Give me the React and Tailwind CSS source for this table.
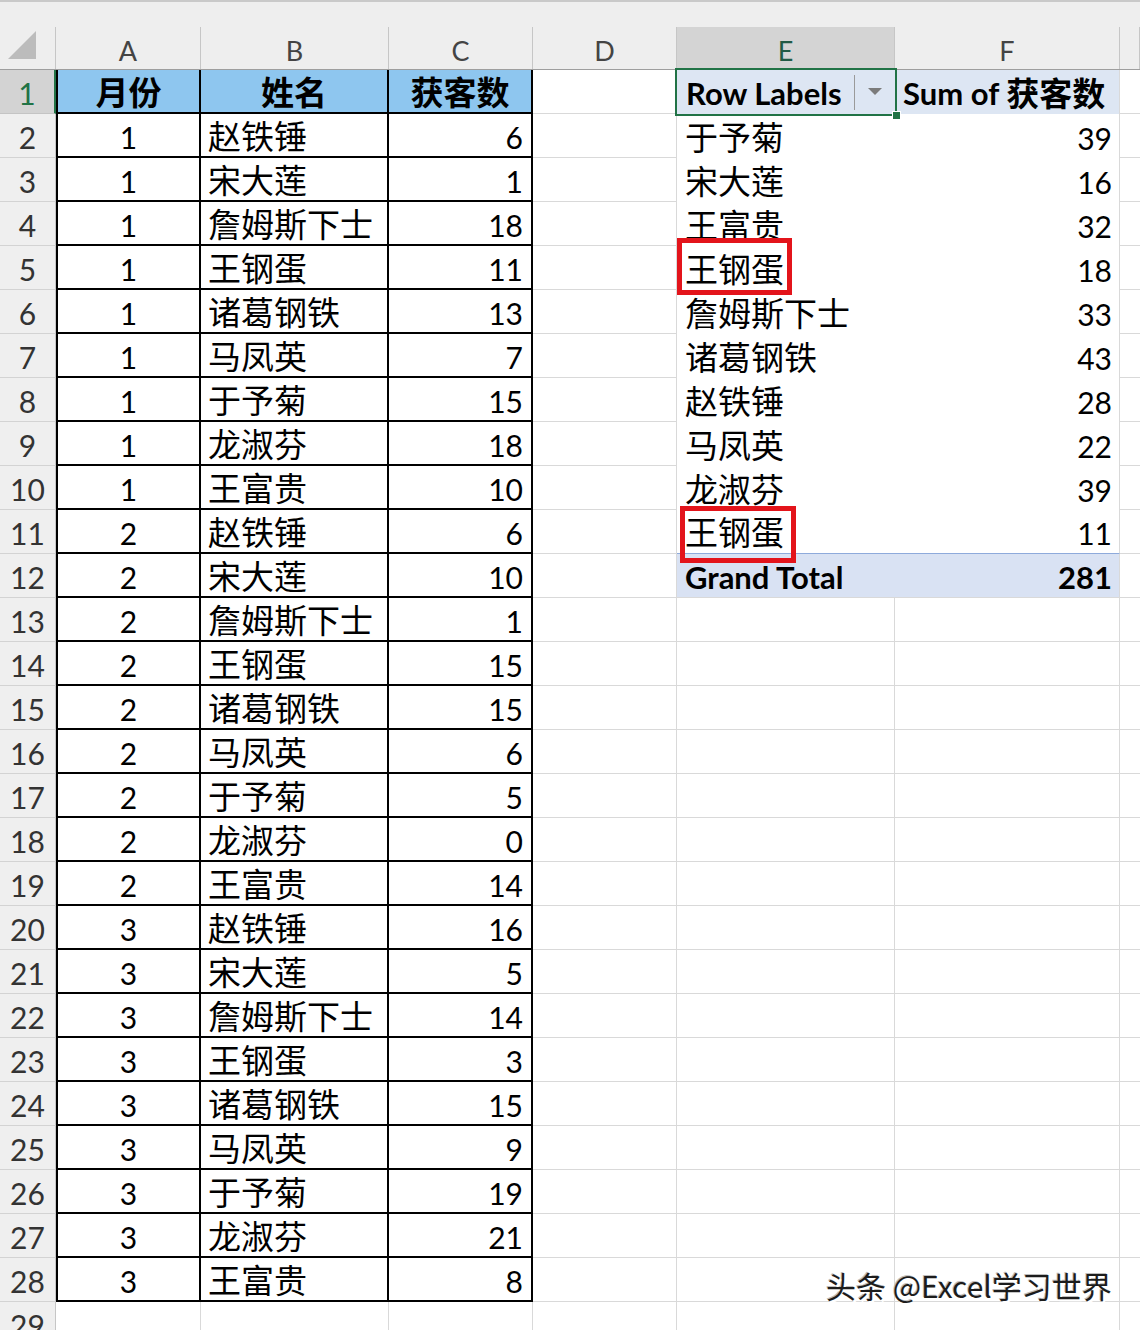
import React from "react";

const names = ["赵铁锤", "宋大莲", "詹姆斯下士", "王钢蛋", "诸葛钢铁", "马凤英", "于予菊", "龙淑芬", "王富贵"];
const counts = [
  [6, 1, 18, 11, 13, 7, 15, 18, 10],
  [6, 10, 1, 15, 15, 6, 5, 0, 14],
  [16, 5, 14, 3, 15, 9, 19, 21, 8],
];
const records = counts.flatMap((list, m) => list.map((count, i) => ({ month: m + 1, name: names[i], count })));

const pivot = [
  { name: "于予菊", total: 39 },
  { name: "宋大莲", total: 16 },
  { name: "王富贵", total: 32 },
  { name: "王钢蛋", total: 18, mark: "five" },
  { name: "詹姆斯下士", total: 33 },
  { name: "诸葛钢铁", total: 43 },
  { name: "赵铁锤", total: 28 },
  { name: "马凤英", total: 22 },
  { name: "龙淑芬", total: 39 },
  { name: "王钢蛋", total: 11, mark: "eleven" },
];

const columns = ["A", "B", "C", "D", "E", "F", ""];
const rowNumbers = Array.from({ length: 29 }, (_, i) => i + 1);

const gridCols = "grid grid-cols-[56px_145px_188px_144px_144px_218px_225px_20px]";
const num = "font-['Lato','Noto_Sans_CJK_SC',sans-serif] text-[30px] leading-none";
const cjk = "font-['Noto_Sans_CJK_SC',sans-serif] text-[33px] leading-none";
const gridline = "border-r border-b border-[#d9d9d9]";
const tableCell = "border-r-2 border-b-2 border-black";

function CornerTriangle() {
  return (
    <svg width="32" height="30" viewBox="0 0 32 30" className="mt-[4px] ml-[6px]">
      <polygon points="30,0 30,28 2,28" fill="#bcbcbc" />
    </svg>
  );
}

function DropdownButton() {
  return (
    <div className="ml-auto flex h-[35px] w-[41px] items-center justify-center border-l border-[#9a9a9a]">
      <svg width="14" height="8" viewBox="0 0 14 8">
        <polygon points="0,0 14,0 7,7" fill="#7b7b7b" />
      </svg>
    </div>
  );
}

function RedBox({ mark }) {
  if (mark === "five") {
    return <div className="absolute left-0 top-[-8px] z-10 h-[57px] w-[115px] border-[5px] border-[#e3141b]" />;
  }
  return <div className="absolute left-[3px] top-[-4px] z-10 h-[57px] w-[116px] border-[5px] border-[#e3141b]" />;
}

function RowHeader({ n }) {
  const active = n === 1;
  return (
    <div
      className={
        "flex items-center justify-center pt-[3px] border-b " +
        num +
        " " +
        (active
          ? "bg-[#d3d3d3] text-[#217346] border-b-[#c4c4c4] border-r-2 border-r-[#217346]"
          : "bg-[#efefef] text-[#333333] border-b-[#d3d3d3] border-r border-r-[#c6c6c6]")
      }
    >
      {n}
    </div>
  );
}

function DataCells({ n }) {
  if (n === 1) {
    const head = "flex items-center justify-center bg-[#8ec6ef] font-bold text-black " + tableCell + " " + cjk;
    return (
      <>
        <div className={head + " border-l-2"}>月份</div>
        <div className={head}>姓名</div>
        <div className={head}>获客数</div>
      </>
    );
  }
  if (n > 28) {
    return (
      <>
        <div className={gridline} />
        <div className={gridline} />
        <div className={gridline} />
      </>
    );
  }
  const r = records[n - 2];
  return (
    <>
      <div className={"flex items-center justify-center pt-[3px] border-l-2 text-black " + tableCell + " " + num}>
        {r.month}
      </div>
      <div className={"flex items-center pl-[7px] text-black " + tableCell + " " + cjk}>{r.name}</div>
      <div className={"flex items-center justify-end pr-[8px] pt-[3px] text-black " + tableCell + " " + num}>
        {r.count}
      </div>
    </>
  );
}

function PivotCells({ n }) {
  if (n === 1) {
    return (
      <>
        <div className="relative flex items-center bg-[#dde6f3] pl-[9px]">
          <span className={"pt-[3px] font-bold text-black " + num + " text-[31px]"}>Row Labels</span>
          <DropdownButton />
          <div className="pointer-events-none absolute -inset-[2px] z-10 border-2 border-[#217346]" />
          <div className="absolute -bottom-[6px] -right-[6px] z-20 h-[9px] w-[9px] border border-white bg-[#217346]" />
        </div>
        <div className="flex items-center whitespace-nowrap bg-[#dde6f3] pl-[8px] border-r border-[#d9d9d9]">
          <span className={"pt-[3px] font-bold text-black " + num + " text-[31px]"}>Sum of&nbsp;</span>
          <span className={"font-bold text-black " + cjk}>获客数</span>
        </div>
      </>
    );
  }
  if (n >= 2 && n <= 11) {
    const p = pivot[n - 2];
    const bottom = n === 11 ? " border-b border-[#8eaadb]" : "";
    return (
      <>
        <div className={"relative flex items-center bg-white pl-[8px] text-black " + cjk + bottom}>
          {p.name}
          {p.mark && <RedBox mark={p.mark} />}
        </div>
        <div
          className={
            "flex items-center justify-end bg-white pr-[7px] pt-[3px] text-black border-r border-r-[#d9d9d9] " +
            num +
            bottom
          }
        >
          {p.total}
        </div>
      </>
    );
  }
  if (n === 12) {
    return (
      <>
        <div className={"flex items-center bg-[#d9e2f3] pl-[8px] pt-[3px] font-bold text-black border-b border-[#d9d9d9] " + num + " text-[31px]"}>
          Grand Total
        </div>
        <div
          className={
            "flex items-center justify-end bg-[#d9e2f3] pr-[7px] pt-[3px] font-bold text-black " +
            gridline +
            " " +
            num +
            " text-[31px]"
          }
        >
          281
        </div>
      </>
    );
  }
  return (
    <>
      <div className={gridline} />
      <div className={gridline} />
    </>
  );
}

function SheetRow({ n }) {
  return (
    <div className={gridCols + " h-[44px]"}>
      <RowHeader n={n} />
      <DataCells n={n} />
      <div className={gridline} />
      <PivotCells n={n} />
      <div className="border-b border-[#d9d9d9]" />
    </div>
  );
}

export default function App() {
  return (
    <div className="relative h-[1330px] w-[1140px] overflow-hidden bg-white">
      <div className="h-[27px] border-t-2 border-[#c9c9c9] bg-[#eeeeee]" />

      <div className={gridCols + " h-[43px] bg-[#eeeeee] border-b border-[#9e9e9e]"}>
        <div className="border-r border-[#c6c6c6]">
          <CornerTriangle />
        </div>
        {columns.map((col) => (
          <div
            key={col || "G"}
            className={
              "flex items-center justify-center pt-[4px] text-[27px] leading-none font-['Lato',sans-serif] border-r " +
              (col === "E"
                ? "bg-[#d4d4d4] text-[#215a45] border-[#c6c6c6]"
                : "text-[#444444] border-[#c6c6c6]")
            }
          >
            {col}
          </div>
        ))}
      </div>

      {rowNumbers.map((n) => (
        <SheetRow key={n} n={n} />
      ))}

      <div className="absolute left-[826px] top-[1270px] z-20 whitespace-nowrap font-['Noto_Sans_CJK_SC',sans-serif] text-[30px] leading-none text-[#1c1c1c] [text-shadow:2px_2px_0_#ffffff,-1px_-1px_0_#bdbdbd]">
        头条 @Excel学习世界
      </div>
    </div>
  );
}
